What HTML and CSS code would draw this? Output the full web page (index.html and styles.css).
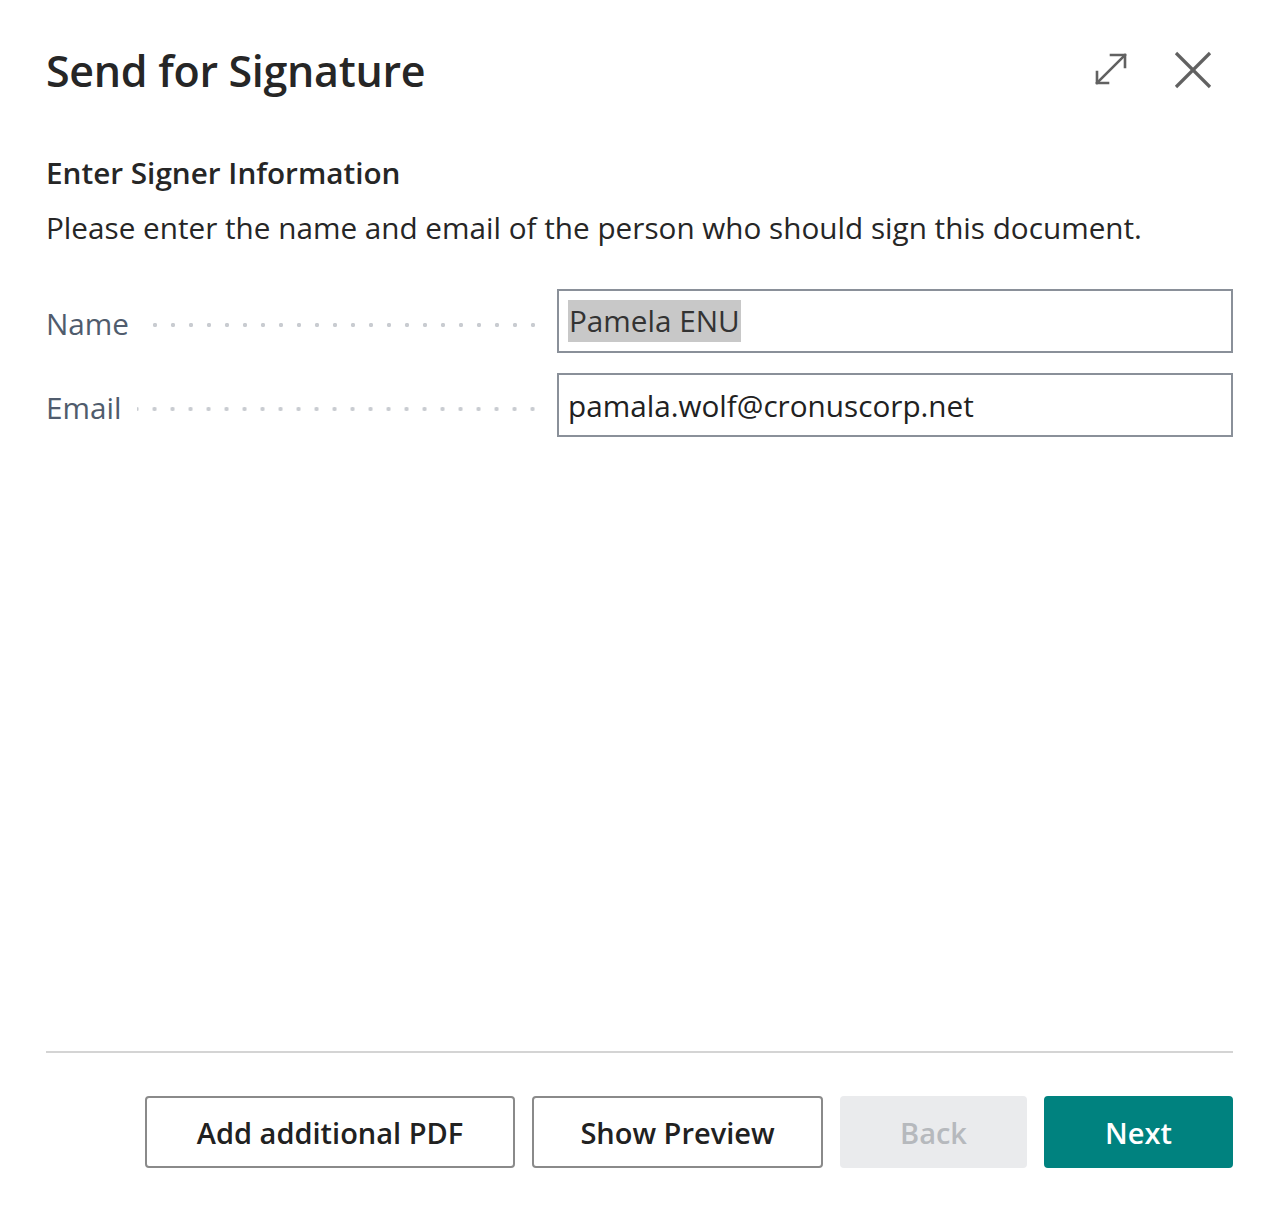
FILE: index.html
```html
<!DOCTYPE html>
<html lang="en">
<head>
<meta charset="utf-8">
<title>Send for Signature</title>
<link rel="stylesheet" href="styles.css">
</head>
<body>
<div class="dialog">
  <header class="dlg-header">
    <h1 class="dlg-title">Send for Signature</h1>
    <div class="dlg-actions">
      <button class="icon-btn" aria-label="Expand">
        <svg width="40" height="40" viewBox="0 0 40 40" fill="none" stroke="#616161" stroke-width="2.6" stroke-linecap="square">
          <line x1="7" y1="33" x2="35" y2="5"/>
          <polyline points="21,5 35,5 35,17"/>
          <polyline points="7,22 7,33 18,33"/>
        </svg>
      </button>
      <button class="icon-btn close" aria-label="Close">
        <svg width="40" height="40" viewBox="0 0 40 40" fill="none" stroke="#616161" stroke-width="3.2">
          <line x1="3" y1="3" x2="37" y2="37"/>
          <line x1="37" y1="3" x2="3" y2="37"/>
        </svg>
      </button>
    </div>
  </header>

  <main class="dlg-body">
    <h2 class="section-title">Enter Signer Information</h2>
    <p class="section-desc">Please enter the name and email of the person who should sign this document.</p>

    <div class="form">
      <div class="field">
        <label class="field-label"><span>Name</span><span class="leader"></span></label>
        <div class="input"><span class="selected">Pamela ENU</span></div>
      </div>
      <div class="field">
        <label class="field-label"><span>Email</span><span class="leader"></span></label>
        <div class="input">pamala.wolf@cronuscorp.net</div>
      </div>
    </div>
  </main>

  <footer class="dlg-footer">
    <button class="btn btn-pdf">Add additional PDF</button>
    <button class="btn btn-preview">Show Preview</button>
    <button class="btn disabled">Back</button>
    <button class="btn primary">Next</button>
  </footer>
</div>
</body>
</html>
```

FILE: styles.css
```css
* { box-sizing: border-box; }

html, body {
  margin: 0;
  padding: 0;
  background: #ffffff;
}

body {
  font-family: "Open Sans", "Noto Sans", "Liberation Sans", sans-serif;
  color: #212121;
}

.dialog {
  min-height: 100vh;
  display: flex;
  flex-direction: column;
  padding: 41px 47px 38px 46px;
}

.dlg-header {
  display: flex;
  justify-content: space-between;
  align-items: flex-start;
}

.dlg-title {
  margin: 0;
  font-size: 43px;
  line-height: 60px;
  font-weight: 600;
  color: #262626;
  letter-spacing: -0.3px;
}

.dlg-actions {
  display: flex;
  gap: 43px;
  margin-top: 9px;
  margin-right: 20px;
}

.icon-btn {
  border: none;
  background: none;
  padding: 0;
  width: 40px;
  height: 40px;
  cursor: pointer;
}

.icon-btn svg { display: block; }

.dlg-body {
  flex: 1;
}

.section-title {
  margin: 52px 0 0;
  font-size: 29.7px;
  line-height: 40px;
  font-weight: 600;
  color: #262626;
}

.section-desc {
  margin: 15px 0 0;
  font-size: 29.7px;
  line-height: 40px;
  color: #262626;
}

.form {
  margin-top: 41px;
  display: flex;
  flex-direction: column;
  gap: 20px;
}

.field {
  display: grid;
  grid-template-columns: 511px 1fr;
  align-items: center;
}

.field-label {
  display: flex;
  align-items: center;
  font-size: 29.7px;
  color: #505c6d;
  padding-right: 15px;
  padding-top: 4px;
}

.leader {
  flex: 1;
  height: 6px;
  margin-left: 16px;
  margin-top: 4px;
  background-image: radial-gradient(circle, #c9ccd1 1.9px, transparent 2.4px);
  background-size: 18px 6px;
  background-repeat: repeat-x;
  background-position: right center;
}

.input {
  height: 64px;
  border: 2px solid #8a9099;
  padding: 0 9px;
  display: flex;
  align-items: center;
  font-size: 29.7px;
  color: #212121;
}

.selected {
  background: #c8c8c8;
  color: #333;
  line-height: 42px;
  padding: 0 1px;
}

.dlg-footer {
  border-top: 2px solid #d4d4d4;
  padding-top: 43px;
  display: flex;
  justify-content: flex-end;
  gap: 17px;
}

.btn {
  height: 72px;
  font-family: inherit;
  font-size: 29px;
  font-weight: 600;
  color: #212121;
  background: #ffffff;
  border: 2px solid #8a8a8a;
  border-radius: 4px;
  padding: 0;
  cursor: pointer;
}

.btn-pdf { width: 370px; }
.btn-preview { width: 291px; }

.btn.disabled {
  background: #eaebed;
  border-color: #eaebed;
  color: #b6b9bd;
  width: 187px;
}

.btn.primary {
  background: #00827f;
  border-color: #00827f;
  color: #ffffff;
  width: 189px;
}
```
